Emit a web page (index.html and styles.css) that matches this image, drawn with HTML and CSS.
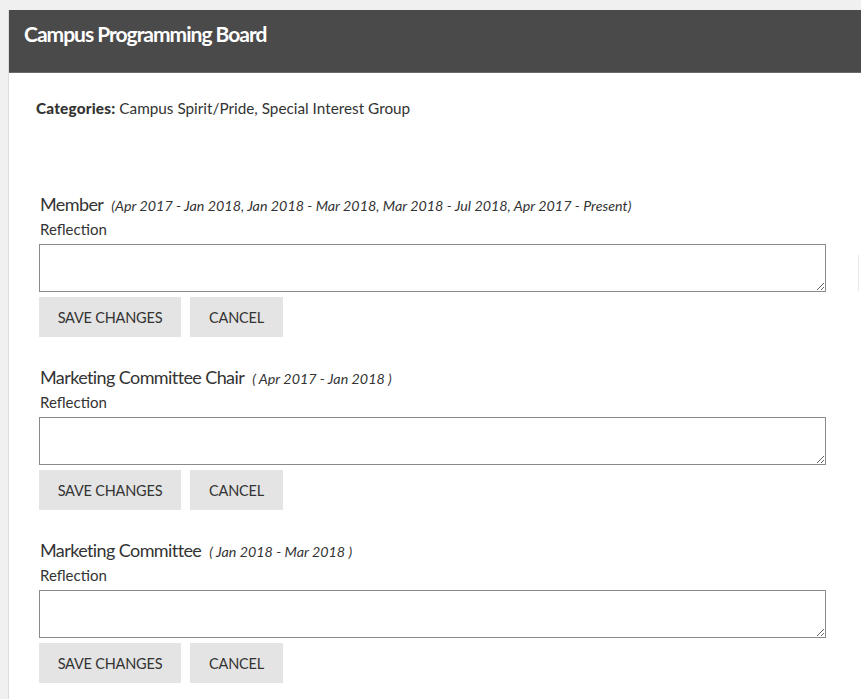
FILE: index.html
```html
<!DOCTYPE html>
<html>
<head>
<meta charset="utf-8">
<link rel="stylesheet" href="styles.css">
</head>
<body>
<div class="page">
  <div class="card">
    <div class="header"><h1 class="title">Campus Programming Board</h1></div>
    <div class="content">
      <p class="categories"><b>Categories:</b> Campus Spirit/Pride, Special Interest Group</p>

      <div class="position">
        <div class="pos-head"><span class="pos-name">Member</span><span class="pos-dates">(Apr 2017 - Jan 2018, Jan 2018 - Mar 2018, Mar 2018 - Jul 2018, Apr 2017 - Present)</span></div>
        <label class="label">Reflection</label>
        <textarea class="reflection"></textarea>
        <div class="actions"><button class="btn save">SAVE CHANGES</button><button class="btn cancel">CANCEL</button></div>
      </div>

      <div class="position">
        <div class="pos-head"><span class="pos-name">Marketing Committee Chair</span><span class="pos-dates">( Apr 2017 - Jan 2018 )</span></div>
        <label class="label">Reflection</label>
        <textarea class="reflection"></textarea>
        <div class="actions"><button class="btn save">SAVE CHANGES</button><button class="btn cancel">CANCEL</button></div>
      </div>

      <div class="position">
        <div class="pos-head"><span class="pos-name">Marketing Committee</span><span class="pos-dates">( Jan 2018 - Mar 2018 )</span></div>
        <label class="label">Reflection</label>
        <textarea class="reflection"></textarea>
        <div class="actions"><button class="btn save">SAVE CHANGES</button><button class="btn cancel">CANCEL</button></div>
      </div>
    </div>
    <div class="edge"></div>
  </div>
</div>
</body>
</html>
```
FILE: styles.css
```css
html, body {
  margin: 0;
  padding: 0;
  background: #f0f0f0;
  font-family: "Lato", "Liberation Sans", sans-serif;
  color: #333;
}
.page {
  padding: 10px 0 0 8px;
}
.card {
  position: relative;
  background: #fff;
  border-left: 1px solid #dcdcdc;
  min-height: 689px;
}
.header {
  background: #4a4a4a;
  height: 63px;
  padding-left: 15px;
  box-sizing: border-box;
  border-bottom: 1px solid #6a6a6a;
}
.title {
  margin: 0;
  padding-top: 11px;
  font-size: 21px;
  line-height: 26px;
  font-weight: 700;
  color: #fff;
  letter-spacing: -1px;
}
.content {
  padding: 25px 35px 0 30px;
}
.categories {
  margin: 0 0 0 -3px;
  font-size: 15.3px;
  line-height: 20px;
  color: #333;
}
.categories b {
  font-weight: 900;
  letter-spacing: 0.2px;
}
.position {
  margin-top: 28px;
}
.position:first-of-type {
  margin-top: 74px;
}
.pos-head {
  padding-left: 1px;
  line-height: 24px;
  height: 24px;
}
.pos-name {
  font-size: 18px;
  letter-spacing: -0.6px;
  color: #333;
}
.pos-dates {
  font-size: 14.3px;
  font-style: italic;
  margin-left: 8px;
  color: #333;
}
.label {
  display: block;
  padding-left: 1px;
  margin-top: 3px;
  font-size: 15px;
  line-height: 20px;
  color: #333;
}
.reflection {
  display: block;
  box-sizing: border-box;
  width: 787px;
  height: 48px;
  margin-top: 5px;
  border: 1px solid #8a8a8a;
  border-radius: 0;
  padding: 4px;
  font-family: inherit;
}
.actions {
  display: flex;
  gap: 9px;
  margin-top: 5px;
}
.btn {
  height: 40px;
  border: none;
  border-radius: 0;
  background: #e4e4e4;
  color: #333;
  font-family: inherit;
  font-size: 14.5px;
  letter-spacing: -0.2px;
  padding: 0;
}
.save { width: 142px; }
.cancel { width: 93px; }
.edge {
  position: absolute;
  right: 0;
  top: 245px;
  width: 2px;
  height: 36px;
  border-left: 1px solid #e6e6e6;
}
```
